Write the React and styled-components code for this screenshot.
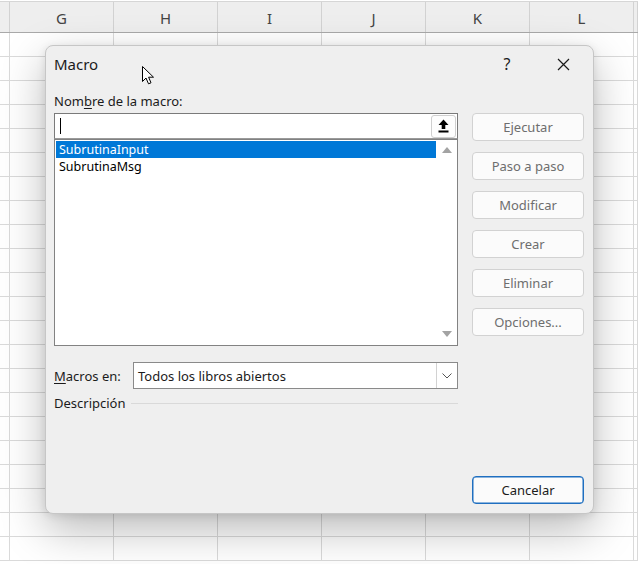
import React from "react";
import styled, { createGlobalStyle } from "styled-components";

const GlobalStyle = createGlobalStyle`
  html, body { margin: 0; padding: 0; background: #fff; }
  body { font-family: "Segoe UI", "Noto Sans", "Open Sans", sans-serif; }
  * { box-sizing: border-box; }
`;

const COLS = ["", "G", "H", "I", "J", "K", "L", ""];
const ROW_COUNT = 22;

const Sheet = styled.div`
  position: relative;
  width: 638px;
  height: 564px;
  overflow: hidden;
  background: #fff;
  padding-top: 1px;
`;

const GridRow = styled.div`
  display: grid;
  grid-template-columns: 10px repeat(6, 104px) 1fr;
  height: ${(p) => (p.$header ? "32px" : "24px")};
  background: ${(p) => (p.$header ? "#eeeeee" : "#fff")};
  border-top: ${(p) => (p.$header ? "1px solid #d6d6d6" : "none")};
  border-bottom: 1px solid ${(p) => (p.$header ? "#a9a9a9" : "#dadada")};
`;

const Cell = styled.div`
  border-right: 1px solid ${(p) => (p.$header ? "#d2d2d2" : "#dadada")};
  display: flex;
  align-items: center;
  justify-content: center;
  font-family: "Noto Sans", sans-serif;
  font-size: 15px;
  color: #444;
  padding-top: 1px;
`;

const Dialog = styled.div`
  position: absolute;
  left: 45px;
  top: 45px;
  width: 549px;
  height: 469px;
  background: #efefef;
  border: 1px solid #c6c6c6;
  border-radius: 8px;
  box-shadow: 0 16px 44px rgba(0, 0, 0, 0.27), 0 2px 8px rgba(0, 0, 0, 0.1);
  display: flex;
  flex-direction: column;
  font-family: "Noto Sans", sans-serif;
  color: #1b1b1b;
`;

const TitleBar = styled.div`
  height: 40px;
  display: flex;
  align-items: center;
  padding: 0 7px 4px 8px;
`;

const Title = styled.div`
  flex: 1;
  font-size: 15px;
`;

const Controls = styled.div`
  display: flex;
  gap: 10px;
  align-items: center;
`;

const CtrlBtn = styled.div`
  width: 46px;
  height: 30px;
  display: flex;
  align-items: center;
  justify-content: center;
  font-size: 16px;
  color: #1b1b1b;
`;

const Body = styled.div`
  flex: 1;
  display: grid;
  grid-template-columns: 404px 112px;
  column-gap: 14px;
  padding: 6px 9px 9px 8px;
`;

const LeftCol = styled.div`
  display: flex;
  flex-direction: column;
`;

const RightCol = styled.div`
  display: flex;
  flex-direction: column;
  gap: 11px;
  padding-top: 21px;
`;

const Label = styled.div`
  font-size: 13px;
  line-height: 18px;
  height: 18px;
  white-space: nowrap;
  u { text-decoration: underline; text-underline-offset: 2px; }
`;

const InputBox = styled.div`
  margin-top: 3px;
  height: 26px;
  background: #fff;
  border: 1px solid #7a7a7a;
  border-bottom-color: #9a9a9a;
  display: flex;
  align-items: center;
  padding-left: 5px;
  padding-right: 1px;
`;

const Caret = styled.div`
  width: 1px;
  height: 16px;
  background: #000;
  flex: none;
`;

const Spacer = styled.div`
  flex: 1;
`;

const IconButton = styled.div`
  width: 25px;
  height: 23px;
  border: 1px solid #cfcfcf;
  border-radius: 3px;
  background: #fdfdfd;
  display: flex;
  align-items: center;
  justify-content: center;
`;

const ListBox = styled.div`
  height: 207px;
  background: #fff;
  border: 1px solid #828282;
  display: flex;
  padding: 1px 0 1px 1px;
`;

const Items = styled.div`
  flex: 1;
  display: flex;
  flex-direction: column;
`;

const Item = styled.div`
  height: 17px;
  line-height: 17px;
  font-size: 12.5px;
  padding-left: 3px;
  background: ${(p) => (p.$selected ? "#0078d7" : "transparent")};
  color: ${(p) => (p.$selected ? "#fff" : "#000")};
`;

const ScrollBar = styled.div`
  width: 21px;
  display: flex;
  flex-direction: column;
  justify-content: space-between;
  align-items: center;
  padding: 6px 0 7px;
`;

const Tri = styled.div`
  width: 0;
  height: 0;
  border-left: 5px solid transparent;
  border-right: 5px solid transparent;
  ${(p) =>
    p.$down
      ? "border-top: 6px solid #a3a3a3;"
      : "border-bottom: 6px solid #a3a3a3;"}
`;

const MacrosRow = styled.div`
  margin-top: 16px;
  display: flex;
  align-items: center;
  height: 27px;
`;

const InlineLabel = styled(Label)`
  width: 79px;
  flex: none;
`;

const Select = styled.div`
  flex: 1;
  height: 27px;
  background: #fff;
  border: 1px solid #8a8a8a;
  display: flex;
  align-items: center;
`;

const SelectText = styled.div`
  flex: 1;
  font-size: 13px;
  padding-left: 4px;
  white-space: nowrap;
`;

const DropBtn = styled.div`
  width: 21px;
  height: 100%;
  border-left: 1px solid #d2d2d2;
  display: flex;
  align-items: center;
  justify-content: center;
`;

const GroupRow = styled.div`
  margin-top: 5px;
  display: flex;
  align-items: center;
  gap: 5px;
`;

const GroupLine = styled.div`
  flex: 1;
  height: 1px;
  background: #d9d9d9;
  margin-top: 1px;
`;

const Button = styled.div`
  height: 28px;
  border: 1px solid ${(p) => (p.$default ? "#1f6fc0" : "#d2d2d2")};
  box-shadow: ${(p) => (p.$default ? "inset 0 0 0 0.5px #1f6fc0" : "none")};
  border-radius: 4px;
  background: #fbfbfb;
  display: flex;
  align-items: center;
  justify-content: center;
  font-size: 13px;
  color: ${(p) => (p.$disabled ? "#6e6e6e" : "#1b1b1b")};
  ${(p) => (p.$push ? "margin-top: auto;" : "")}
`;

const Cursor = styled.svg`
  position: absolute;
  left: 142px;
  top: 66px;
`;

const UploadIcon = () => (
  <svg width="11" height="14" viewBox="0 0 11 14">
    <path d="M5.5 0.5 L10.5 6 H7.3 V10 H3.7 V6 H0.5 Z" fill="#000" />
    <rect x="0.5" y="11.5" width="10" height="2" fill="#000" />
  </svg>
);

const CloseIcon = () => (
  <svg width="13" height="13" viewBox="0 0 13 13">
    <path d="M1 1 L12 12 M12 1 L1 12" stroke="#1b1b1b" strokeWidth="1.2" />
  </svg>
);

const Chevron = () => (
  <svg width="10" height="6" viewBox="0 0 10 6">
    <path d="M0.5 0.5 L5 5 L9.5 0.5" stroke="#555" strokeWidth="1" fill="none" />
  </svg>
);

const buttons = ["Ejecutar", "Paso a paso", "Modificar", "Crear", "Eliminar", "Opciones..."];

export default function App() {
  return (
    <>
      <GlobalStyle />
      <Sheet>
        <GridRow $header>
          {COLS.map((c, i) => (
            <Cell $header key={i}>{c}</Cell>
          ))}
        </GridRow>
        {Array.from({ length: ROW_COUNT }).map((_, r) => (
          <GridRow key={r}>
            {COLS.map((_, i) => (
              <Cell key={i} />
            ))}
          </GridRow>
        ))}

        <Dialog>
          <TitleBar>
            <Title>Macro</Title>
            <Controls>
              <CtrlBtn>?</CtrlBtn>
              <CtrlBtn>
                <CloseIcon />
              </CtrlBtn>
            </Controls>
          </TitleBar>
          <Body>
            <LeftCol>
              <Label>
                Nom<u>b</u>re de la macro:
              </Label>
              <InputBox>
                <Caret />
                <Spacer />
                <IconButton>
                  <UploadIcon />
                </IconButton>
              </InputBox>
              <ListBox>
                <Items>
                  <Item $selected>SubrutinaInput</Item>
                  <Item>SubrutinaMsg</Item>
                </Items>
                <ScrollBar>
                  <Tri />
                  <Tri $down />
                </ScrollBar>
              </ListBox>
              <MacrosRow>
                <InlineLabel>
                  <u>M</u>acros en:
                </InlineLabel>
                <Select>
                  <SelectText>Todos los libros abiertos</SelectText>
                  <DropBtn>
                    <Chevron />
                  </DropBtn>
                </Select>
              </MacrosRow>
              <GroupRow>
                <Label>Descripción</Label>
                <GroupLine />
              </GroupRow>
            </LeftCol>
            <RightCol>
              {buttons.map((b) => (
                <Button $disabled key={b}>
                  {b}
                </Button>
              ))}
              <Button $default $push>
                Cancelar
              </Button>
            </RightCol>
          </Body>
        </Dialog>

        <Cursor width="13" height="19" viewBox="0 0 13 19">
          <path
            d="M0.5 0.5 L0.5 15.5 L4 12 L6.5 17.8 L9 16.8 L6.6 11.2 L11.5 11.2 Z"
            fill="#fff"
            stroke="#000"
            strokeWidth="1"
            strokeLinejoin="round"
          />
        </Cursor>
      </Sheet>
    </>
  );
}
